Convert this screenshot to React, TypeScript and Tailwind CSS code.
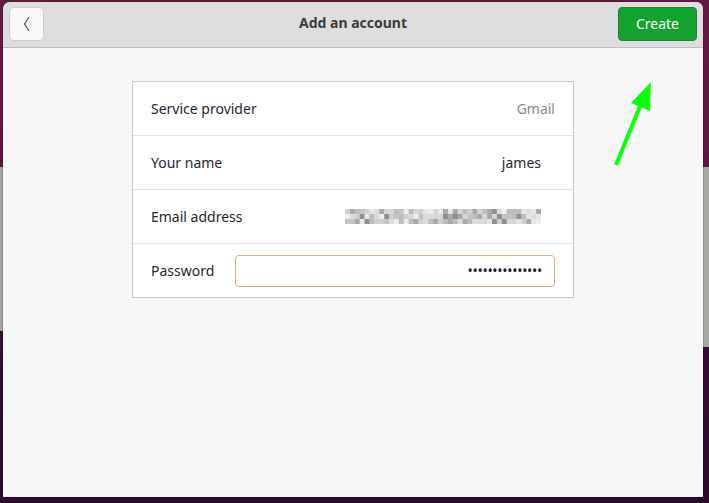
import React from "react";

function Pixelated() {
  const cols = 40;
  const rows = 3;
  const w = 196 / cols;
  const h = 15 / rows;
  const shades = ["#c4c4c4", "#d6d6d6", "#e6e6e6", "#bdbdbd", "#cfcfcf", "#dcdcdc", "#a9a9a9", "#ededed", "#8f8f8f"];
  const rects: React.ReactElement[] = [];
  let seed = 7;
  const rnd = () => {
    seed = (seed * 9301 + 49297) % 233280;
    return seed / 233280;
  };
  for (let r = 0; r < rows; r++) {
    for (let c = 0; c < cols; c++) {
      const v = rnd();
      const idx = v < 0.05 ? 8 : v < 0.12 ? 6 : Math.floor(rnd() * 8);
      rects.push(
        <rect key={`${r}-${c}`} x={c * w} y={r * h} width={w + 0.3} height={h + 0.3} fill={shades[idx]} />
      );
    }
  }
  return (
    <svg width="196" height="15" viewBox="0 0 196 15" className="block">
      {rects}
    </svg>
  );
}

function Row({ label, children, last }: { label: string; children: React.ReactNode; last?: boolean }) {
  return (
    <div
      className={`flex items-center justify-between pl-[18px] pr-[18px] ${
        last ? "h-[53px]" : "h-[54px] border-b border-[#e2e2e2]"
      }`}
    >
      <span className="text-[14px] text-[#2a2530]">{label}</span>
      {children}
    </div>
  );
}

export default function App() {
  return (
    <div
      className="relative h-[503px] w-[709px] overflow-hidden bg-[linear-gradient(180deg,#641b41_0%,#5a1840_32%,#3a0d34_62%,#2c0a2c_100%)]"
      style={{ fontFamily: '"Noto Sans", "Open Sans", sans-serif' }}
    >
      {/* windows behind (desktop) */}
      <div className="absolute left-0 top-[167px] h-[164px] w-[6px] bg-[#a3a3a0]" />
      <div className="absolute right-0 top-[167px] h-[180px] w-[10px] bg-[#a9a9a6]" />

      {/* main window */}
      <div className="absolute left-[3px] top-[2px] flex h-[495px] w-[700px] flex-col overflow-hidden rounded-t-[7px] bg-[#f7f7f7] shadow-[0_0_0_1px_rgba(0,0,0,0.15)]">
        <div className="relative flex h-[46px] shrink-0 items-start justify-between border-b border-[#bdbdbd] bg-[#dedede] px-[6px] pt-[5px]">
          <button className="flex h-[34px] w-[35px] items-center justify-center rounded-[4px] border border-[#cdcdcd] bg-[#f8f8f8]">
            <svg width="10" height="16" viewBox="0 0 10 16">
              <polyline points="7,1 2.5,8 7,15" fill="none" stroke="#3c4848" strokeWidth="1.1" />
            </svg>
          </button>
          <span className="absolute left-1/2 top-[12px] -translate-x-1/2 text-[14px] font-bold leading-[18px] text-[#3b3b3b]">
            Add an account
          </span>
          <button className="flex h-[34px] w-[79px] items-center justify-center rounded-[4px] border border-[#2b7d32] bg-[#14a22f] pb-[2px] text-[14px] text-white">
            Create
          </button>
        </div>

        <div className="flex flex-1 justify-center pt-[33px]">
          <div className="w-[442px] self-start border border-[#c9c9c9] bg-white">
            <Row label="Service provider">
              <span className="text-[14px] text-[#8a8a8a]">Gmail</span>
            </Row>
            <Row label="Your name">
              <span className="pr-[14px] text-[14px] text-[#2a2530]">james</span>
            </Row>
            <Row label="Email address">
              <div className="pr-[14px]">
                <Pixelated />
              </div>
            </Row>
            <Row label="Password" last>
              <div className="flex h-[32px] w-[320px] items-center justify-end rounded-[4px] border border-[#eaa77f] bg-white pr-[12px]">
                <span className="text-[14px] leading-none tracking-[-0.3px] text-[#2a1a2e]">•••••••••••••••</span>
              </div>
            </Row>
          </div>
        </div>
      </div>

      {/* green annotation arrow */}
      <svg className="absolute left-0 top-0" width="709" height="503" viewBox="0 0 709 503">
        <line x1="616" y1="165" x2="641" y2="104" stroke="#0cff0c" strokeWidth="4" />
        <polygon points="651,82 650,111 631,103" fill="#0cff0c" />
      </svg>
    </div>
  );
}
